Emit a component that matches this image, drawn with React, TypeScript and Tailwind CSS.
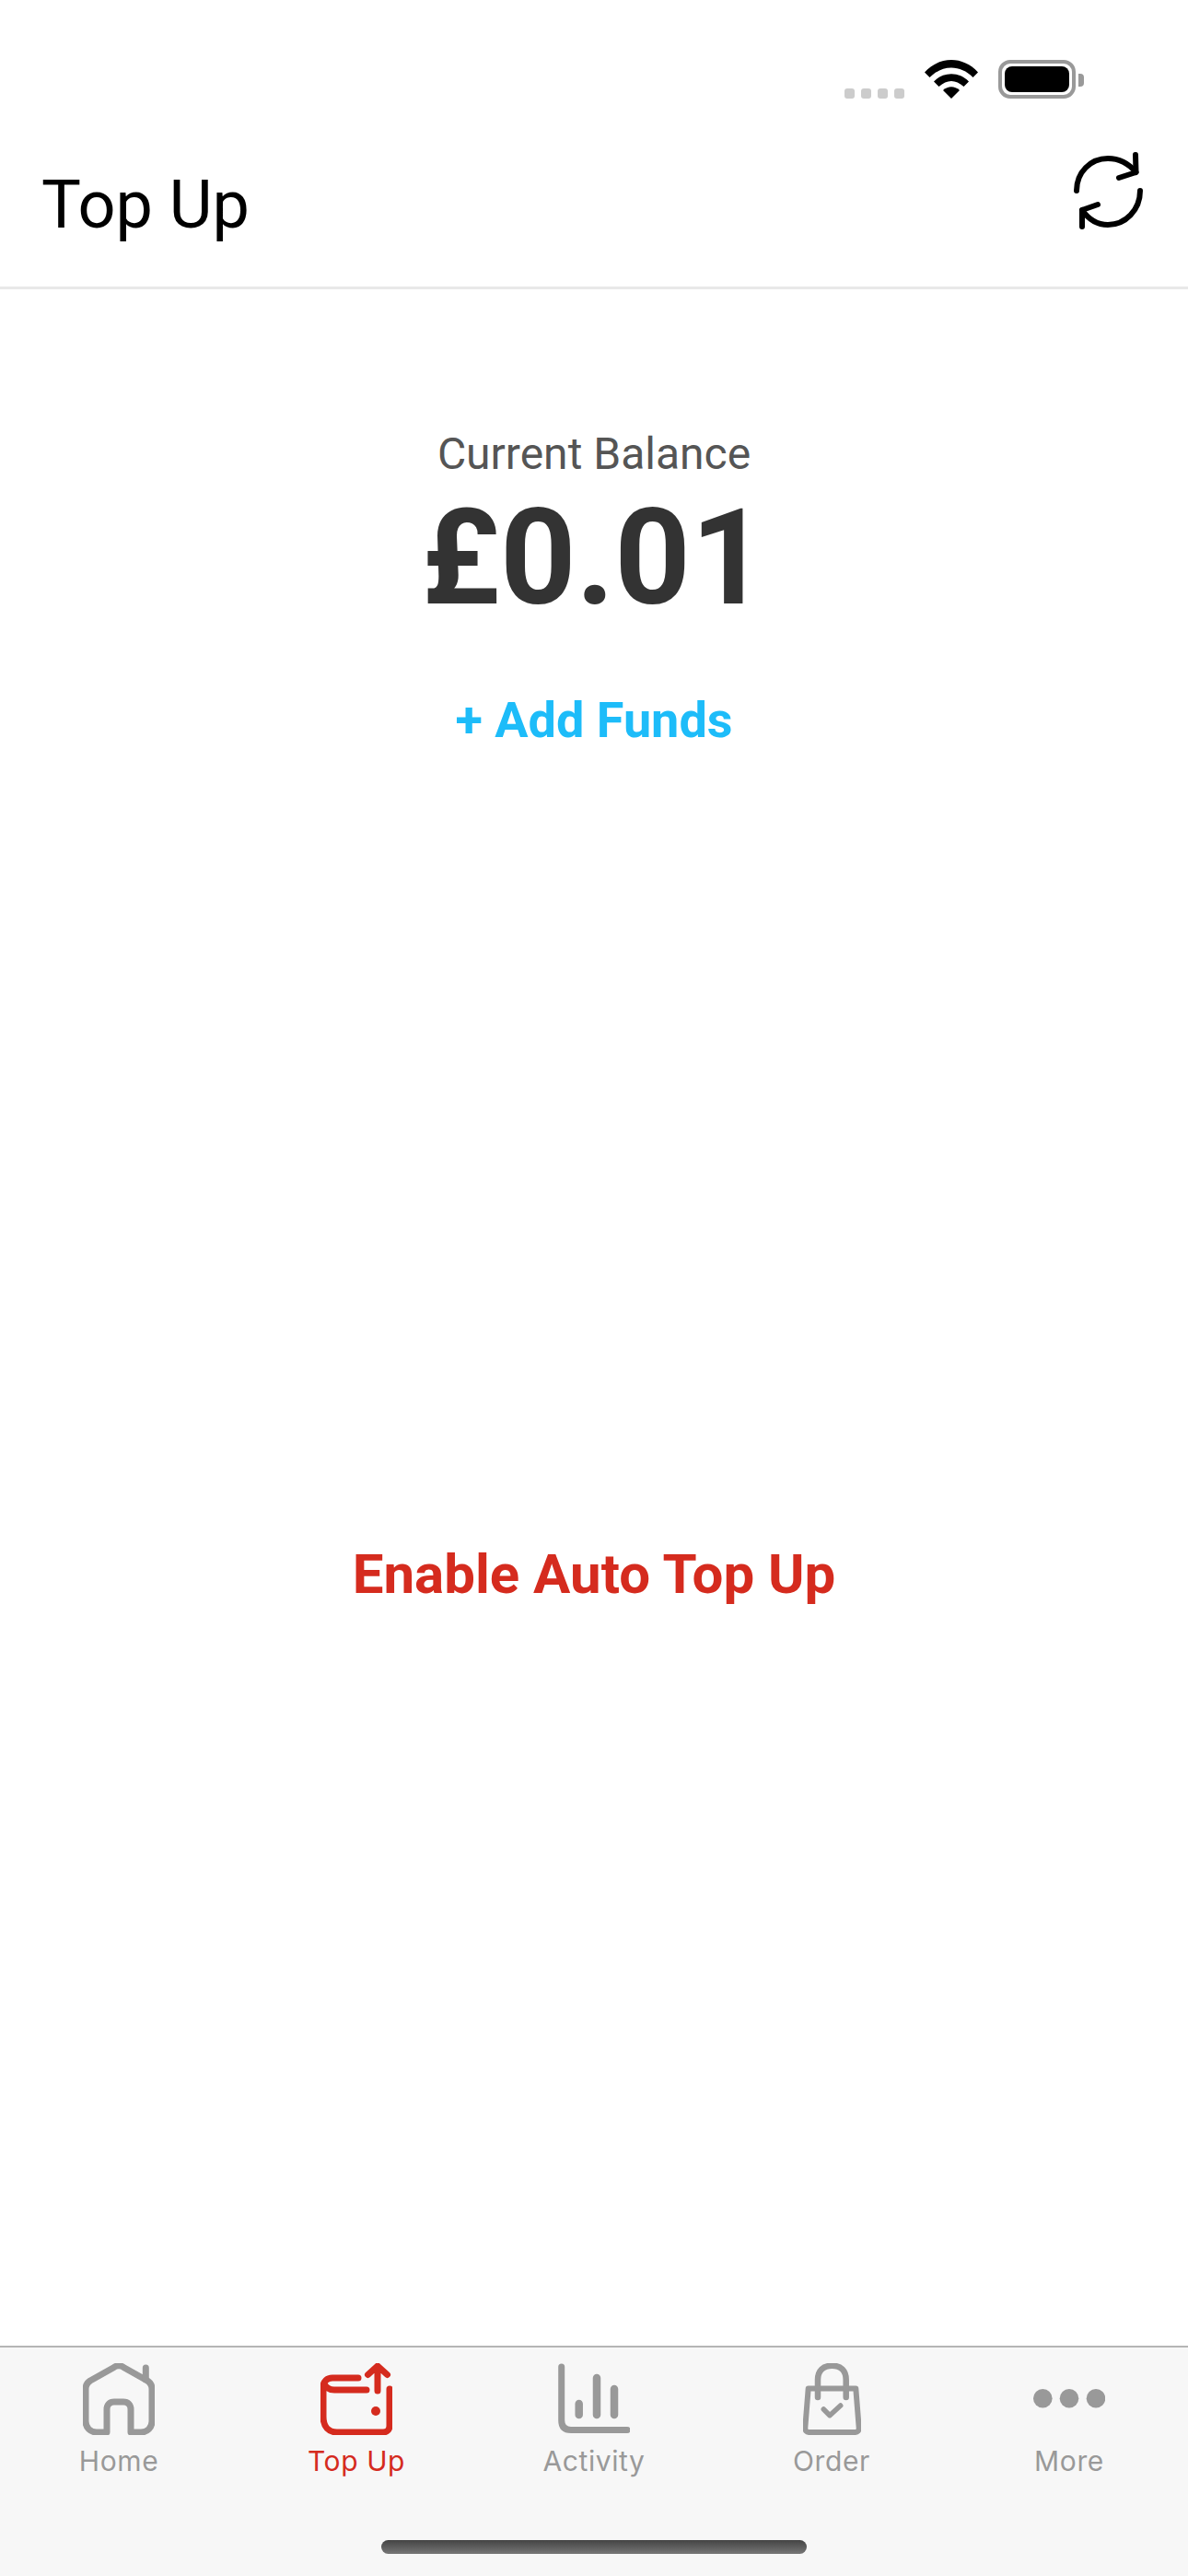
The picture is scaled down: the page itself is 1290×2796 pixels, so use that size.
import React from 'react'

const roboto = "font-['Roboto',sans-serif]"

function RefreshIcon() {
  return (
    <svg width="84" height="92" viewBox="0 0 84 92" fill="none" stroke="#000" strokeWidth="6" strokeLinecap="round" strokeLinejoin="round">
      <path d="M10 47C10 27 25 12 44 12C56 12 67 18 74.5 27" />
      <path d="M74 8L74.500 27L56 33" />
      <path d="M79 47C79 68 63 84 44 84C33 84 23 78 16 68" />
      <path d="M16 86L16 68L33 62" />
    </svg>
  )
}

function WifiIcon() {
  return (
    <svg width="58" height="42" viewBox="0 0 58 42" fill="#000">
      <path d="M0 13.500C16 -4.500 42 -4.500 58 13.500L52.500 19C39 5 19 5 5.500 19Z" />
      <path d="M10 23.500C20 12.500 38 12.500 48 23.500L42.500 29C33.500 21 24.500 21 15.500 29Z" />
      <path d="M20 33C25.500 28 32.500 28 38 33L29 42Z" />
    </svg>
  )
}

function HomeIcon() {
  return (
    <svg width="78" height="78" viewBox="0 0 78 78" fill="none" stroke="#999" strokeWidth="7" strokeLinecap="round" strokeLinejoin="round">
      <path d="M26 75H15C8 75 3 70 3 63V28C3 24 5 21 8 19L33 5C37 2 41 2 45 5L70 19C73 21 75 24 75 28V63C75 70 70 75 63 75H52V50C52 45 49 42 44 42H34C29 42 26 45 26 50V75Z" />
      <path d="M68.300 5V18" />
    </svg>
  )
}

function TopUpIcon() {
  return (
    <svg width="78" height="78" viewBox="0 0 78 78" fill="none" stroke="#d52b1e" strokeWidth="7" strokeLinecap="round" strokeLinejoin="round">
      <path d="M41 16H13C7 16 3 20 3 26V58C3 69 9 75 18 75H68C72 75 75 72 75 68V28" />
      <path d="M4 22C6 27 10 29 15 29H50" />
      <path d="M62 30V4M51.500 12.500L62 3L72.500 12.500" />
      <circle cx="60" cy="52" r="5" fill="#d52b1e" stroke="none" />
    </svg>
  )
}

function ActivityIcon() {
  return (
    <svg width="78" height="78" viewBox="0 0 78 78" fill="none" stroke="#999" strokeLinecap="round" strokeLinejoin="round">
      <path d="M3.700 4V62C3.700 69 7 72.500 14 72.500H75" strokeWidth="7" />
      <path d="M22.700 44V56M42 16V56M61 28V56" strokeWidth="8.500" />
    </svg>
  )
}

function OrderIcon() {
  return (
    <svg width="63" height="78" viewBox="0 0 63 78" fill="none" stroke="#999" strokeLinecap="round" strokeLinejoin="round">
      <path d="M5.700 27.500H57.300L60.700 70C61 73 59 75 57 75H6C4 75 2 73 2.300 70Z" strokeWidth="6" />
      <path d="M16 37V18C16 8 22 2.700 31.500 2.700C41 2.700 46.700 8 46.700 18V37" strokeWidth="6.500" />
      <path d="M22.300 50L29 56.700L40.700 46" strokeWidth="5.500" />
    </svg>
  )
}

function MoreIcon() {
  return (
    <svg width="78" height="78" viewBox="0 0 78 78" fill="#999">
      <circle cx="10.300" cy="38.300" r="10.300" />
      <circle cx="39" cy="38.300" r="10.300" />
      <circle cx="68" cy="38.300" r="10.300" />
    </svg>
  )
}

const tabs = [
  { label: 'Home', icon: <HomeIcon />, active: false },
  { label: 'Top Up', icon: <TopUpIcon />, active: true },
  { label: 'Activity', icon: <ActivityIcon />, active: false },
  { label: 'Order', icon: <OrderIcon />, active: false },
  { label: 'More', icon: <MoreIcon />, active: false },
]

export default function App() {
  return (
    <div className={`w-[1290px] h-[2796px] flex flex-col bg-white overflow-hidden ${roboto}`}>
      <div className="h-[311px] shrink-0 flex flex-col">
        <div className="flex justify-end items-end gap-[22px] pt-[65px] pr-[122px] h-[107px]">
          <div className="flex gap-[7px]">
            {[0, 1, 2, 3].map((i) => (
              <div key={i} className="w-[11px] h-[11px] rounded-[3px] bg-[#cccccc]" />
            ))}
          </div>
          <WifiIcon />
          <div className="relative w-[84px] h-[42px] rounded-[13px] border-[4px] border-[#999999] p-[3px]">
            <div className="w-full h-full rounded-[8px] bg-black" />
            <div className="absolute left-[83px] top-[11px] w-[6px] h-[14px] rounded-r-[4px] bg-[#999999]" />
          </div>
        </div>
        <div className="flex justify-between items-start pl-[45px] pr-[47px]">
          <h1 className="text-[72px] leading-[84px] mt-[74px] text-black font-normal">Top Up</h1>
          <div className="mt-[53px]">
            <RefreshIcon />
          </div>
        </div>
      </div>
      <div className="h-[3px] shrink-0 bg-[#e8e8e8]" />

      <main className="flex-1 flex flex-col items-center">
        <p className="mt-[151px] text-[48px] leading-[56px] text-[#555555]">Current Balance</p>
        <p className="mt-[13px] text-[144px] leading-[144px] font-bold text-[#333333]">£0.01</p>
        <button className="mt-[72px] text-[54px] leading-[64px] font-bold text-[#1dbcf9]">+ Add Funds</button>
        <button className="mt-[860px] text-[60px] leading-[70px] font-bold text-[#d52b1e]">Enable Auto Top Up</button>
      </main>

      <nav className="h-[250px] shrink-0 flex flex-col bg-[#f7f7f7] border-t-[2px] border-[#b5b5b5]">
        <div className="grid grid-cols-5 pt-[17px]">
          {tabs.map((tab) => (
            <div key={tab.label} className="flex flex-col items-center">
              <div className="h-[78px] flex items-center justify-center">{tab.icon}</div>
              <span
                className={`mt-[10px] text-[30px] leading-[36px] tracking-[0.6px] font-['Inter',sans-serif] ${
                  tab.active ? 'text-[#d52b1e]' : 'text-[#999999]'
                }`}
              >
                {tab.label}
              </span>
            </div>
          ))}
        </div>
        <div className="mt-[68px] self-center w-[462px] h-[15px] rounded-full bg-gradient-to-b from-[#444444] to-[#777777]" />
      </nav>
    </div>
  )
}
